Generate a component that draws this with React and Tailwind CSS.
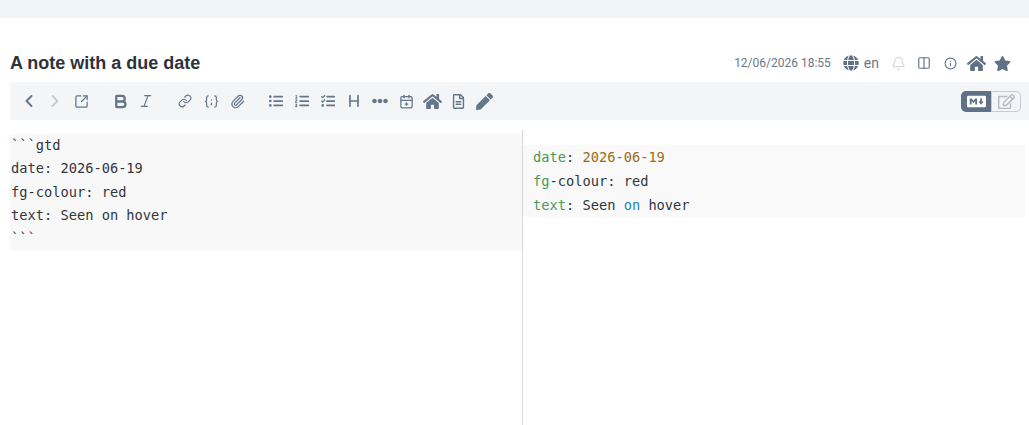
import { ChevronLeft, ChevronRight, SquareArrowOutUpRight, Bold, Italic, Link, Paperclip, Heading, CalendarPlus2, Columns2, Info, Bell } from 'lucide-react'
import { FaGlobe, FaHome, FaStar, FaEllipsisH, FaRegFileAlt, FaPen, FaMarkdown, FaRegEdit, FaListUl, FaListOl, FaTasks } from 'react-icons/fa'

function BracesIcon({ size }) {
  return (
    <svg width={size} height={size} viewBox="0 0 16 16" fill="none" stroke="currentColor" strokeWidth="1.3" strokeLinecap="round" strokeLinejoin="round">
      <path d="M4.5 2C3 2 2.8 3 2.8 4v2.5C2.8 7.4 2.2 8 1.4 8c.8 0 1.4.6 1.4 1.5V12c0 1 .2 2 1.7 2" />
      <path d="M11.5 2c1.5 0 1.7 1 1.7 2v2.5c0 .9.6 1.5 1.4 1.5-.8 0-1.4.6-1.4 1.5V12c0 1-.2 2-1.7 2" />
      <path d="M8 6.2v.4M8 9.6v1.2l-.5 1" />
    </svg>
  )
}

const toolbarGroups = [
  [
    { icon: ChevronLeft, size: 20, stroke: 2.25 },
    { icon: ChevronRight, size: 20, stroke: 2.25, disabled: true },
    { icon: SquareArrowOutUpRight, size: 15, stroke: 2 },
  ],
  [
    { icon: Bold, size: 17, stroke: 3.25 },
    { icon: Italic, size: 16 },
  ],
  [
    { icon: Link, size: 14, stroke: 2 },
    { icon: BracesIcon, size: 15, solid: true },
    { icon: Paperclip, size: 15, stroke: 2 },
  ],
  [
    { icon: FaListUl, size: 14, solid: true },
    { icon: FaListOl, size: 14, solid: true },
    { icon: FaTasks, size: 14, solid: true },
    { icon: Heading, size: 16, stroke: 2.5 },
    { icon: FaEllipsisH, size: 16, solid: true },
    { icon: CalendarPlus2, size: 15, stroke: 2 },
    { icon: FaHome, size: 19, solid: true },
    { icon: FaRegFileAlt, size: 15, solid: true },
    { icon: FaPen, size: 17, solid: true },
  ],
]

function ToolButton({ item }) {
  const Icon = item.icon
  return (
    <button className={`w-[26px] h-[26px] flex items-center justify-center ${item.disabled ? 'text-[#c5ccd4]' : 'text-[#64768a]'}`}>
      {item.solid ? <Icon size={item.size} /> : <Icon size={item.size} strokeWidth={item.stroke || 1.75} />}
    </button>
  )
}

export default function App() {
  return (
    <div className="h-[425px] w-[1029px] overflow-hidden bg-white flex flex-col">
      <div className="h-[18px] bg-[#eef4f7]" />

      {/* Title row */}
      <div className="h-[64px] pl-[10px] pr-[14px] pt-[26px] flex items-center justify-between">
        <h1 className="font-['Liberation_Sans',sans-serif] font-bold text-[18px] text-[#2d3339]">A note with a due date</h1>
        <div className="flex items-center text-[#5f7186]">
          <span className="font-['Roboto',sans-serif] text-[12px] text-[#6b7785] mr-[12px]">12/06/2026 18:55</span>
          <FaGlobe size={16} />
          <span className="font-['Roboto',sans-serif] text-[14px] text-[#6b7785] ml-[5px] mr-[6px]">en</span>
          <div className="w-[26px] flex justify-center"><Bell size={15} className="text-[#d5dadf]" /></div>
          <div className="w-[26px] flex justify-center"><Columns2 size={14} strokeWidth={2} /></div>
          <div className="w-[26px] flex justify-center"><Info size={13} /></div>
          <div className="w-[26px] flex justify-center"><FaHome size={19} /></div>
          <div className="w-[26px] flex justify-center"><FaStar size={17} /></div>
        </div>
      </div>

      {/* Toolbar */}
      <div className="h-[38px] ml-[10px] bg-[#f3f5f7] pl-[6px] pr-[8px] flex items-center justify-between">
        <div className="flex items-center gap-[13px]">
          {toolbarGroups.map((group, i) => (
            <div key={i} className="flex items-center">
              {group.map((item, j) => <ToolButton key={j} item={item} />)}
            </div>
          ))}
        </div>
        <div className="flex h-[21px] w-[60px]">
          <div className="w-[30px] rounded-l-[5px] bg-[#5f7186] flex items-center justify-center">
            <FaMarkdown size={19} className="text-white" />
          </div>
          <div className="w-[30px] rounded-r-[5px] border border-[#c5ccd4] flex items-center justify-center">
            <FaRegEdit size={17} className="text-[#b4bcc5]" />
          </div>
        </div>
      </div>

      {/* Editor panes */}
      <div className="flex-1 flex pt-[10px] font-['DejaVu_Sans_Mono',monospace] text-[13.7px] text-[#32373f]">
        <div className="w-[522px] pl-[10px] pt-[4px]">
          <div className="h-[116px] bg-[#f8f8f8] pl-px flex flex-col">
            <div className="h-[23px] leading-[23px]">```gtd</div>
            <div className="h-[24px] leading-[23px]">date: 2026-06-19</div>
            <div className="h-[23px] leading-[23px]">fg-colour: red</div>
            <div className="h-[23px] leading-[23px]">text: Seen on hover</div>
            <div className="h-[23px] leading-[23px]">```</div>
          </div>
        </div>
        <div className="flex-1 border-l border-[#d8d8d8] pt-[15px]">
          <div className="w-[502px] h-[72px] bg-[#f9f9f9] pl-[10px] flex flex-col">
            <div className="h-[24px] leading-[24px]"><span className="text-[#4a9a5a]">date</span>: <span className="text-[#9a6e14]">2026-06-19</span></div>
            <div className="h-[24px] leading-[24px]"><span className="text-[#4a9a5a]">fg</span>-colour: red</div>
            <div className="h-[24px] leading-[24px]"><span className="text-[#4a9a5a]">text</span>: Seen <span className="text-[#1f85b5]">on</span> hover</div>
          </div>
        </div>
      </div>
    </div>
  )
}
